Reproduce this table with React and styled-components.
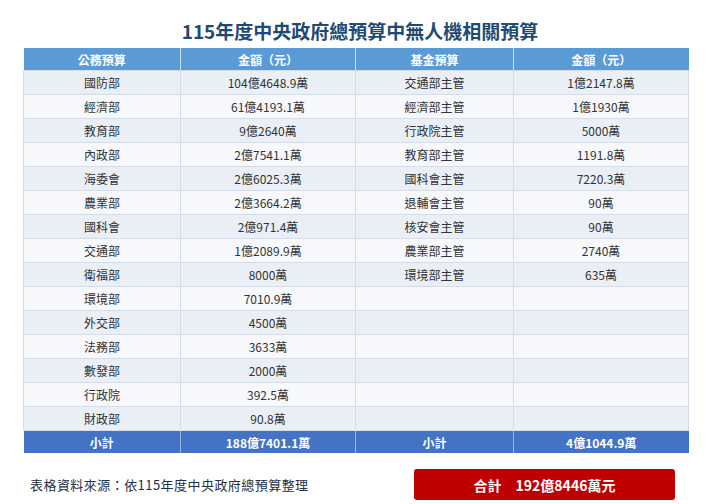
import React from "react";
import styled, { createGlobalStyle } from "styled-components";

const Global = createGlobalStyle`
  html, body { margin: 0; padding: 0; background: #ffffff; }
  body { font-family: "Noto Sans CJK TC", "Noto Sans", sans-serif; }
`;

const Page = styled.div`
  width: 720px;
  height: 504px;
  display: flex;
  flex-direction: column;
  box-sizing: border-box;
  padding-top: 17px;
`;

const Title = styled.h1`
  margin: 0;
  text-align: center;
  font-size: 19px;
  line-height: 28px;
  font-weight: 700;
  color: #1f4a75;
`;

const Table = styled.table`
  margin: 3px 0 0 23px;
  width: 665px;
  border-collapse: collapse;
  table-layout: fixed;
  font-size: 12px;
  color: #333;
`;

const Th = styled.th`
  height: 22px;
  padding: 0;
  background: #5b9bd5;
  color: #fff;
  font-weight: 700;
  font-size: 12px;
  border-left: 1px solid #cfe0f2;
  &:first-child { border-left: none; }
`;

const Tr = styled.tr`
  background: ${(p) => (p.$odd ? "#eaeff6" : "#f6f8fc")};
`;

const Td = styled.td`
  height: 23px;
  padding: 0;
  text-align: center;
  border: 1px solid #d5dde8;
  line-height: 22px;
`;

const SumTd = styled.td`
  height: 22px;
  padding: 0;
  text-align: center;
  background: #4472c4;
  color: #fff;
  font-weight: 700;
  border-left: 1px solid #9db4dd;
  &:first-child { border-left: none; }
`;

const Footer = styled.div`
  display: flex;
  align-items: center;
  justify-content: space-between;
  margin-top: 16px;
  padding: 0 45px 0 30px;
`;

const Source = styled.div`
  font-size: 13px;
  color: #1f2f45;
  letter-spacing: 0.45px;
`;

const Total = styled.div`
  width: 261px;
  height: 31px;
  border-radius: 3px;
  background: #c00000;
  color: #fff;
  font-weight: 700;
  font-size: 14px;
  display: flex;
  align-items: center;
  justify-content: center;
  gap: 14px;
`;

const publicRows = [
  ["國防部", "104億4648.9萬"],
  ["經濟部", "61億4193.1萬"],
  ["教育部", "9億2640萬"],
  ["內政部", "2億7541.1萬"],
  ["海委會", "2億6025.3萬"],
  ["農業部", "2億3664.2萬"],
  ["國科會", "2億971.4萬"],
  ["交通部", "1億2089.9萬"],
  ["衛福部", "8000萬"],
  ["環境部", "7010.9萬"],
  ["外交部", "4500萬"],
  ["法務部", "3633萬"],
  ["數發部", "2000萬"],
  ["行政院", "392.5萬"],
  ["財政部", "90.8萬"],
];

const fundRows = [
  ["交通部主管", "1億2147.8萬"],
  ["經濟部主管", "1億1930萬"],
  ["行政院主管", "5000萬"],
  ["教育部主管", "1191.8萬"],
  ["國科會主管", "7220.3萬"],
  ["退輔會主管", "90萬"],
  ["核安會主管", "90萬"],
  ["農業部主管", "2740萬"],
  ["環境部主管", "635萬"],
];

export default function App() {
  return (
    <Page>
      <Global />
      <Title>115年度中央政府總預算中無人機相關預算</Title>
      <Table>
        <colgroup>
          <col style={{ width: 157 }} />
          <col style={{ width: 175 }} />
          <col style={{ width: 158 }} />
          <col style={{ width: 175 }} />
        </colgroup>
        <thead>
          <tr>
            <Th>公務預算</Th>
            <Th>金額（元）</Th>
            <Th>基金預算</Th>
            <Th>金額（元）</Th>
          </tr>
        </thead>
        <tbody>
          {publicRows.map((r, i) => {
            const f = fundRows[i] || ["", ""];
            return (
              <Tr key={i} $odd={i % 2 === 0}>
                <Td>{r[0]}</Td>
                <Td>{r[1]}</Td>
                <Td>{f[0]}</Td>
                <Td>{f[1]}</Td>
              </Tr>
            );
          })}
          <tr>
            <SumTd>小計</SumTd>
            <SumTd>188億7401.1萬</SumTd>
            <SumTd>小計</SumTd>
            <SumTd>4億1044.9萬</SumTd>
          </tr>
        </tbody>
      </Table>
      <Footer>
        <Source>表格資料來源：依115年度中央政府總預算整理</Source>
        <Total>
          <span>合計</span>
          <span>192億8446萬元</span>
        </Total>
      </Footer>
    </Page>
  );
}
